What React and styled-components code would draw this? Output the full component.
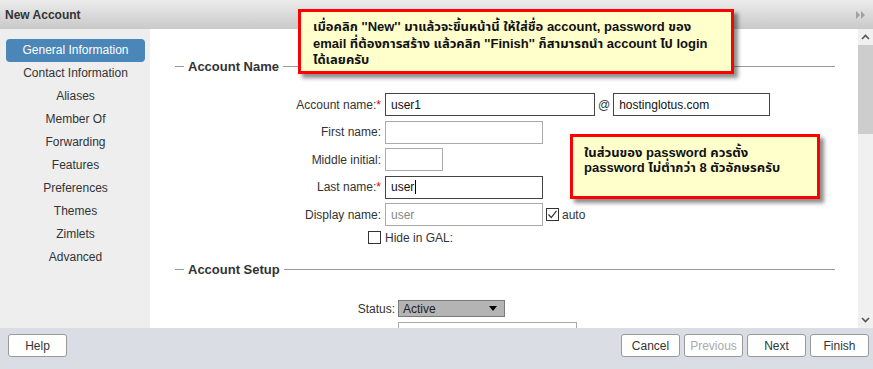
import React from "react";
import styled, { createGlobalStyle } from "styled-components";

const Global = createGlobalStyle`
  html, body { margin: 0; padding: 0; overflow: hidden; background: #fff; }
  body { font-family: "Liberation Sans", Arial, sans-serif; font-size: 12px; color: #333; }
  * { box-sizing: border-box; }
`;

const Dialog = styled.div`
  position: relative;
  width: 873px;
  height: 369px;
  display: flex;
  flex-direction: column;
  overflow: hidden;
`;

const Header = styled.div`
  flex: none;
  height: 29px;
  display: flex;
  align-items: center;
  justify-content: space-between;
  padding: 0 7px 0 5px;
  background: linear-gradient(#ececec, #c9c9c9);
  font-weight: bold;
  font-size: 12px;
  color: #333;
`;

const Body = styled.div`
  flex: 1;
  min-height: 0;
  display: flex;
`;

const Sidebar = styled.nav`
  flex: none;
  width: 150px;
  background: #eeeeee;
  padding: 10px 5px 0 6px;
  display: flex;
  flex-direction: column;
`;

const NavItem = styled.div`
  height: 23px;
  line-height: 23px;
  text-align: center;
  border-radius: 4px;
  font-size: 12px;
  color: ${(p) => (p.$active ? "#fff" : "#333")};
  background: ${(p) => (p.$active ? "#4a86b8" : "transparent")};
`;

const Main = styled.main`
  flex: 1;
  min-width: 0;
  background: #fff;
  padding: 0 23px 0 25px;
  overflow: hidden;
`;

const SectionHead = styled.div`
  display: flex;
  align-items: center;
  gap: 4px;
  height: 16px;
  margin-top: ${(p) => p.$top}px;
  &::before {
    content: "";
    width: 9px;
    border-top: 1px solid #999;
  }
  &::after {
    content: "";
    flex: 1;
    border-top: 1px solid #999;
  }
`;

const SectionTitle = styled.span`
  font-weight: bold;
  font-size: 13px;
  color: #333;
`;

const Form = styled.div`
  display: grid;
  grid-template-columns: ${(p) => p.$labelWidth}px auto;
  column-gap: ${(p) => p.$gap}px;
  row-gap: 4.6px;
  align-items: center;
  justify-items: start;
  margin-top: ${(p) => p.$top}px;
`;

const Label = styled.div`
  justify-self: end;
  font-size: 12px;
  color: #333;
  white-space: nowrap;
`;

const TrailLabel = styled.div`
  justify-self: start;
  font-size: 12px;
  color: #333;
  white-space: nowrap;
`;

const Req = styled.span`
  color: #d00;
`;

const FieldLine = styled.div`
  display: flex;
  align-items: center;
  gap: 3px;
`;

const Field = styled.div`
  width: ${(p) => p.$w}px;
  height: ${(p) => p.$h || 23}px;
  border: 1px solid ${(p) => (p.$dark ? "#444" : "#aaa")};
  background: #fff;
  padding: 0 5px;
  display: flex;
  align-items: center;
  font-size: 12px;
  color: ${(p) => (p.$muted ? "#888" : "#111")};
`;

const Caret = styled.span`
  display: inline-block;
  width: 0;
  height: 14px;
  border-left: 1px solid #000;
  margin-left: 1px;
`;

const Select = styled.div`
  width: 107px;
  height: 17px;
  border: 1px solid #7a7a7a;
  background: #b4b4b4;
  display: flex;
  align-items: center;
  justify-content: space-between;
  padding: 0 7px 0 4px;
  font-size: 12px;
  color: #222;
`;

const Box = styled.span`
  width: 13px;
  height: 13px;
  border: 1px solid #333;
  background: #fff;
  display: inline-flex;
  align-items: center;
  justify-content: center;
  justify-self: ${(p) => (p.$end ? "end" : "auto")};
`;

const CheckLabel = styled.span`
  display: inline-flex;
  align-items: center;
  gap: 3px;
  font-size: 12px;
  color: #333;
`;

const Scrollbar = styled.div`
  flex: none;
  width: 15px;
  background: #f0f0f0;
  display: flex;
  flex-direction: column;
`;

const ScrollBtn = styled.div`
  height: 16px;
  display: flex;
  align-items: center;
  justify-content: center;
`;

const Thumb = styled.div`
  height: 89px;
  background: #cdcdcd;
`;

const Spacer = styled.div`
  flex: 1;
`;

const Footer = styled.footer`
  flex: none;
  height: 41px;
  background: #dadde3;
  display: flex;
  justify-content: space-between;
  align-items: flex-start;
  padding: 6px 4px 0 8px;
`;

const ButtonGroup = styled.div`
  display: flex;
  gap: 4px;
`;

const Button = styled.button`
  width: 59px;
  height: 23px;
  border: 1px solid #999;
  border-radius: 3px;
  background: #fff;
  font-family: "Liberation Sans", Arial, sans-serif;
  font-size: 12px;
  color: ${(p) => (p.disabled ? "#aaa" : "#333")};
  padding: 0;
`;

const Callout = styled.div`
  position: absolute;
  left: ${(p) => p.$x}px;
  top: ${(p) => p.$y}px;
  width: ${(p) => p.$w}px;
  height: ${(p) => p.$h}px;
  background: #ffffcc;
  border: 3px solid #f00;
  box-shadow: 4px 4px 4px rgba(0, 0, 0, 0.45);
  padding: ${(p) => p.$pad};
  font-family: "Liberation Sans", "Noto Sans Thai", Tahoma, "DejaVu Sans", sans-serif;
  font-weight: bold;
  font-size: 13px;
  line-height: ${(p) => p.$lh}px;
  color: #111;
  white-space: nowrap;
`;

const Chevron = ({ up }) => (
  <svg width="9" height="6" viewBox="0 0 9 6">
    <path
      d={up ? "M1 5 L4.5 1.5 L8 5" : "M1 1 L4.5 4.5 L8 1"}
      fill="none"
      stroke="#555"
      strokeWidth="1.6"
    />
  </svg>
);

const nav = [
  "General Information",
  "Contact Information",
  "Aliases",
  "Member Of",
  "Forwarding",
  "Features",
  "Preferences",
  "Themes",
  "Zimlets",
  "Advanced",
];

export default function App() {
  return (
    <>
      <Global />
      <Dialog>
        <Header>
          <span>New Account</span>
          <svg width="10" height="8" viewBox="0 0 10 8">
            <path d="M0 0 L4 4 L0 8 Z M5 0 L9 4 L5 8 Z" fill="#a0a0a0" />
          </svg>
        </Header>
        <Body>
          <Sidebar>
            {nav.map((n, i) => (
              <NavItem key={n} $active={i === 0}>
                {n}
              </NavItem>
            ))}
          </Sidebar>
          <Main>
            <SectionHead $top={29}>
              <SectionTitle>Account Name</SectionTitle>
            </SectionHead>
            <Form $labelWidth={206} $gap={4} $top={19}>
              <Label>
                Account name:<Req>*</Req>
              </Label>
              <FieldLine>
                <Field $w={210} $dark>user1</Field>
                <span>@</span>
                <Field $w={157} $dark>hostinglotus.com</Field>
              </FieldLine>
              <Label>First name:</Label>
              <Field $w={158} />
              <Label>Middle initial:</Label>
              <Field $w={58} />
              <Label>
                Last name:<Req>*</Req>
              </Label>
              <Field $w={158} $dark>
                user
                <Caret />
              </Field>
              <Label>Display name:</Label>
              <FieldLine>
                <Field $w={158} $muted>user</Field>
                <CheckLabel>
                  <Box>
                    <svg width="11" height="11" viewBox="0 0 11 11">
                      <path d="M1.5 5.5 L4.3 8.5 L9.5 1.8" fill="none" stroke="#333" strokeWidth="1.2" />
                    </svg>
                  </Box>
                  auto
                </CheckLabel>
              </FieldLine>
              <Box $end />
              <TrailLabel>Hide in GAL:</TrailLabel>
            </Form>
            <SectionHead $top={16.5}>
              <SectionTitle>Account Setup</SectionTitle>
            </SectionHead>
            <Form $labelWidth={220} $gap={3} $top={23}>
              <Label>Status:</Label>
              <Select>
                <span>Active</span>
                <svg width="8" height="5" viewBox="0 0 8 5">
                  <path d="M0 0 H8 L4 5 Z" fill="#000" />
                </svg>
              </Select>
              <span />
              <Field $w={179} />
            </Form>
          </Main>
          <Scrollbar>
            <ScrollBtn>
              <Chevron up />
            </ScrollBtn>
            <Thumb />
            <Spacer />
            <ScrollBtn>
              <Chevron />
            </ScrollBtn>
          </Scrollbar>
        </Body>
        <Footer>
          <Button>Help</Button>
          <ButtonGroup>
            <Button>Cancel</Button>
            <Button disabled>Previous</Button>
            <Button>Next</Button>
            <Button>Finish</Button>
          </ButtonGroup>
        </Footer>
        <Callout $x={298} $y={9} $w={436} $h={65} $pad="7px 0 0 12px" $lh={16.5}>
          เมื่อคลิก ''New'' มาแล้วจะขึ้นหน้านี้ ให้ใส่ชื่อ account, password ของ
          <br />
          email ที่ต้องการสร้าง แล้วคลิก ''Finish'' ก็สามารถนำ account ไป login
          <br />
          ได้เลยครับ
        </Callout>
        <Callout $x={570} $y={134} $w={250} $h={65} $pad="8px 0 0 11px" $lh={15}>
          ในส่วนของ password ควรตั้ง
          <br />
          password ไม่ต่ำกว่า 8 ตัวอักษรครับ
        </Callout>
      </Dialog>
    </>
  );
}
